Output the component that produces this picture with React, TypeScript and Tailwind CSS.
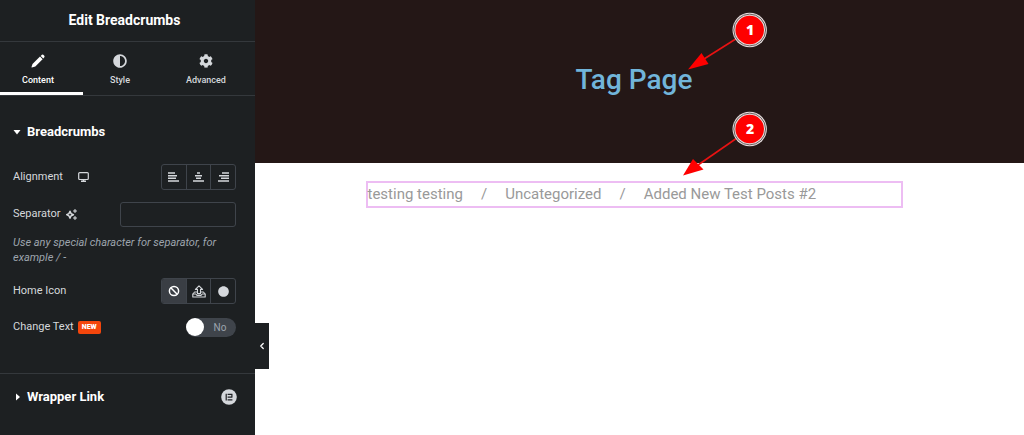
import { useState } from "react";
import { FaAdjust, FaCog, FaCircle } from "react-icons/fa";
import { ChevronLeft } from "lucide-react";

const tabs = [
  { id: "content", label: "Content", icon: PencilIcon, className: "basis-[83px] pr-[7px]" },
  { id: "style", label: "Style", icon: FaAdjust, className: "basis-[74px]" },
  { id: "advanced", label: "Advanced", icon: FaCog, className: "basis-[98px]" },
];

const crumbs = ["testing testing", "Uncategorized", "Added New Test Posts #2"];

const alignments = [
  { id: "Left", d: "M0 1h7M0 3.7h9M0 6.3h8M0 9h11" },
  { id: "Center", d: "M4 1h3M2 3.7h7M3 6.3h5M0 9h11" },
  { id: "Right", d: "M4 1h7M1 3.7h10M3 6.3h8M0 9h11" },
];

function PencilIcon({ className }: { className?: string }) {
  return (
    <svg viewBox="0 0 14 14" fill="currentColor" className={className}>
      <path d="M9 2.6L11.6 5.2L4.3 12.5L0.9 13.4Q0.4 13.5 0.5 13L1.5 10.1Z" />
      <path d="M9.7 1.9L10.9 0.8Q11.6 0.2 12.3 0.8L13.3 1.8Q13.9 2.5 13.3 3.2L12.3 4.5Z" />
    </svg>
  );
}

function DesktopIcon() {
  return (
    <svg width="11" height="10" viewBox="0 0 11 10" fill="none" stroke="currentColor">
      <rect x="0.7" y="0.6" width="9.6" height="6.9" rx="1" strokeWidth="1.2" />
      <path d="M3 9.2h5M5.5 7.5v1.5" strokeWidth="1.5" />
    </svg>
  );
}

function SparkleIcon() {
  return (
    <svg width="11" height="11" viewBox="0 0 11 11" fill="none" stroke="currentColor">
      <path d="M4 2.2L5.1 4.6L7.4 5.7L5.1 6.8L4 9.1L2.9 6.8L0.7 5.7L2.9 4.6Z" strokeWidth="1.5" strokeLinejoin="round" />
      <path d="M9 0l.6 1.4L11 2l-1.4.6L9 4l-.6-1.4L7 2l1.4-.6zM9 7l.6 1.4L11 9l-1.4.6L9 11l-.6-1.4L7 9l1.4-.6z" fill="currentColor" strokeWidth="0.4" />
    </svg>
  );
}

function BanIcon() {
  return (
    <svg width="12" height="12" viewBox="0 0 12 12" fill="none" stroke="currentColor" strokeWidth="1.5">
      <circle cx="6" cy="6" r="4.6" />
      <path d="M2.8 2.8l6.4 6.4" />
    </svg>
  );
}

function UploadIcon() {
  return (
    <svg width="14" height="13" viewBox="0 0 14 13" fill="none" stroke="currentColor" strokeWidth="1.1" strokeLinejoin="round">
      <path d="M7 0.8L10.6 4.4H8.5V8.6H5.5V4.4H3.4Z" />
      <path d="M5.5 7H2.6L0.8 9V12H13.2V9L11.4 7H8.5" />
      <path d="M0.8 9H3.8L5 10.4H9L10.2 9H13.2" />
    </svg>
  );
}

function ElementorIcon() {
  return (
    <svg width="16" height="16" viewBox="0 0 16 16">
      <circle cx="8" cy="8" r="7.8" fill="#d5d8dc" />
      <path d="M5.2 4.8v6.6M6.6 5.4h4.8M6.6 8.1h4.8M6.6 10.8h4.8M10.9 5v3" stroke="#1f2124" strokeWidth="1.2" />
    </svg>
  );
}

// numbered circle with an arrow running down to the tip
function Marker({ n, cy, tip, head, base }: { n: number; cy: number; tip: string; head: string; base: [number, number] }) {
  return (
    <g>
      <line x1="750" y1={cy} x2={base[0]} y2={base[1]} stroke="#e81212" strokeWidth="1.6" />
      <polygon points={`${tip} ${head}`} fill="#fe0000" />
      <circle cx="749.7" cy={cy} r="17.2" fill="#e4dcdc" />
      <circle cx="749.7" cy={cy} r="15.9" fill="none" stroke="#5c4f4e" strokeWidth="0.9" />
      <circle cx="749.7" cy={cy} r="14.3" fill="#fe0000" />
      <text
        x="750"
        y={cy + 5}
        textAnchor="middle"
        className="fill-white font-['Open_Sans',sans-serif] text-sm font-extrabold"
      >
        {n}
      </text>
    </g>
  );
}

export default function App() {
  const [activeTab, setActiveTab] = useState("content");
  const [separator, setSeparator] = useState("");
  const [changeText, setChangeText] = useState(false);

  return (
    <div className="relative flex min-h-screen overflow-hidden bg-white font-[Roboto,sans-serif]">
      <aside className="relative w-[255px] shrink-0 bg-[#1d2022] text-[11px] text-[#d5d8dc]">
        <h1 className="border-b border-[#34383c] py-2 pr-1.5 text-center text-sm leading-[25px] font-bold text-white">
          Edit Breadcrumbs
        </h1>

        <nav className="flex h-[54px] border-b border-[#34383c]">
          {tabs.map(({ id, label, icon: Icon, className }) => (
            <button
              key={id}
              onClick={() => setActiveTab(id)}
              className={`flex shrink-0 flex-col items-center gap-1 border-b-3 pt-3 text-[9px] leading-4 font-medium ${className} ${
                activeTab === id ? "border-white text-white" : "border-transparent"
              }`}
            >
              <Icon className="size-[14px]" />
              {label}
            </button>
          ))}
        </nav>

        <section className="pt-6 pr-[19px] pb-9 pl-[13px]">
          <h2>
            <button className="flex items-center gap-1.5 text-[13px] leading-6 font-bold text-white">
              <svg width="8" height="5" viewBox="0 0 8 5">
                <path d="M0.5 0h7L4 4.5z" fill="currentColor" />
              </svg>
              Breadcrumbs
            </button>
          </h2>

          <div className="mt-5 flex h-[26px] items-center">
            <span>Alignment</span>
            <button aria-label="Desktop" className="ml-[15px]">
              <DesktopIcon />
            </button>
            <div className="ml-auto flex h-[26px] w-[75px] divide-x divide-[#3f444b] overflow-hidden rounded-[3px] border border-[#3f444b]">
              {alignments.map((a) => (
                <button key={a.id} aria-label={a.id} className="flex flex-1 items-center justify-center">
                  <svg width="11" height="10" viewBox="0 0 11 10" stroke="currentColor" strokeWidth="1.6">
                    <path d={a.d} />
                  </svg>
                </button>
              ))}
            </div>
          </div>

          <div className="mt-3 flex h-[25px] items-center">
            <label htmlFor="separator">Separator</label>
            <button aria-label="AI" className="ml-[5px]">
              <SparkleIcon />
            </button>
            <input
              id="separator"
              value={separator}
              onChange={(e) => setSeparator(e.target.value)}
              className="ml-auto h-[25px] w-[116px] rounded-[3px] border border-[#3f444b] bg-transparent px-2 outline-none"
            />
          </div>
          <p className="mt-2 leading-[15px] text-[#9da5ae] italic">
            Use any special character for separator, for example / -
          </p>

          <div className="mt-[13px] flex h-[26px] items-center">
            <span>Home Icon</span>
            <div className="ml-auto flex h-[26px] w-[75px] divide-x divide-[#3f444b] overflow-hidden rounded-[3px] border border-[#3f444b]">
              <button aria-label="None" className="flex flex-1 items-center justify-center bg-[#3a3e44] text-white">
                <BanIcon />
              </button>
              <button aria-label="Upload SVG" className="flex flex-1 items-center justify-center">
                <UploadIcon />
              </button>
              <button aria-label="Icon Library" className="flex flex-1 items-center justify-center">
                <FaCircle className="size-[11px]" />
              </button>
            </div>
          </div>

          <div className="mt-[13px] flex h-5 items-center">
            <label htmlFor="change-text">Change Text</label>
            <span className="ml-1 rounded-xs bg-[#f4460c] px-1 text-[7px] leading-[13px] font-black text-white">
              NEW
            </span>
            <label className="ml-auto flex h-[19px] w-[50px] cursor-pointer items-center rounded-full bg-[#3f444b] text-[10px] text-[#9da5ae] has-checked:flex-row-reverse">
              <input
                id="change-text"
                type="checkbox"
                checked={changeText}
                onChange={(e) => setChangeText(e.target.checked)}
                className="sr-only"
              />
              <span className="size-[18px] rounded-full bg-white" />
              <span className="flex-1 text-center">{changeText ? "Yes" : "No"}</span>
            </label>
          </div>
        </section>

        <section className="flex items-center border-t border-[#34383c] pt-[11px] pr-[18px] pl-4">
          <h2 className="flex-1">
            <button className="flex items-center gap-[7px] text-[13px] leading-6 font-bold text-white">
              <svg width="4" height="8" viewBox="0 0 4 8">
                <path d="M0 0.5v7l4-3.5z" fill="currentColor" />
              </svg>
              Wrapper Link
            </button>
          </h2>
          <ElementorIcon />
        </section>

        {/* collapse handle hangs over the preview */}
        <button
          aria-label="Hide Panel"
          className="absolute top-[323px] left-full flex h-[46px] w-[14px] items-center justify-center bg-[#1d2022] text-white"
        >
          <ChevronLeft className="size-[10px]" strokeWidth={3} />
        </button>
      </aside>

      <main className="min-w-0 flex-1">
        <header className="flex h-[163px] justify-center bg-[#241716] pt-[60px] pr-[11px]">
          <h1 className="text-[28px] leading-10 font-medium text-[#71b5da]">Tag Page</h1>
        </header>
        <div className="flex justify-center pt-[18px] pr-[11px]">
          <nav className="w-full max-w-[537px] border-2 border-[#edbdf3] text-[15px] leading-[23px] text-[#999]">
            <ol className="flex">
              {crumbs.map((crumb, i) => (
                <li key={crumb} className="flex">
                  {i > 0 && <span className="px-[18px]">/</span>}
                  <a href="#">{crumb}</a>
                </li>
              ))}
            </ol>
          </nav>
        </div>
      </main>

      <svg className="pointer-events-none absolute top-0 left-0" width="1024" height="220" viewBox="0 0 1024 220">
        <Marker n={1} cy={30} tip="688,69.5" head="701.5,53 708.5,64" base={[704, 59]} />
        <Marker n={2} cy={129} tip="683,175.5" head="693,159 703.5,169.5" base={[698, 165]} />
      </svg>
    </div>
  );
}
